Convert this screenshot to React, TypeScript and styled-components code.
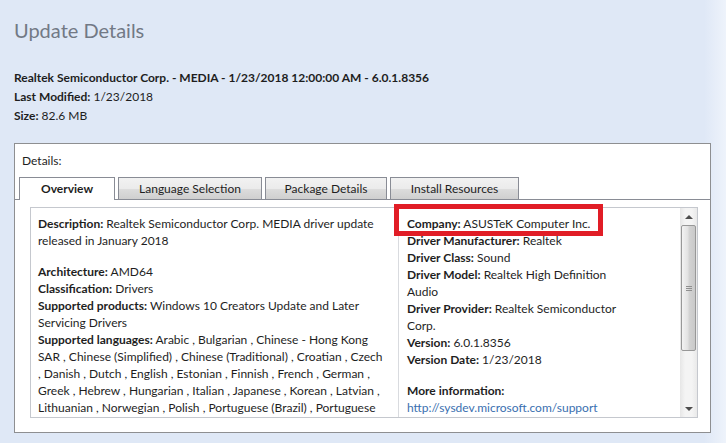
import React from "react";
import styled, { createGlobalStyle } from "styled-components";

const GlobalStyle = createGlobalStyle`
  html, body {
    margin: 0;
    height: 100%;
  }
  body {
    background: linear-gradient(90deg, #dfe8f6 0%, #dfe8f6 97%, #eef3fb 100%);
    font-family: Lato, "Open Sans", sans-serif;
    font-size: 12px;
    color: #1e1e1e;
    overflow: hidden;
  }
`;

const Page = styled.div`
  padding: 18px 15px 0 14px;
`;

const Title = styled.h1`
  margin: 0;
  font-size: 20px;
  line-height: 24px;
  font-weight: 400;
  color: #727985;
`;

const Summary = styled.div`
  margin-top: 26px;
  line-height: 19px;
`;

const Label = styled.b`
  font-weight: 700;
`;

const GroupBox = styled.div`
  margin-top: 18px;
  width: 697px;
  height: 290px;
  box-sizing: border-box;
  border: 1px solid #8e8f91;
  background: #fff;
  display: flex;
  flex-direction: column;
`;

const Caption = styled.div`
  padding: 9px 0 0 7px;
  line-height: 16px;
  height: 24px;
`;

const TabStrip = styled.div`
  display: flex;
  gap: 3px;
  padding-left: 4px;
  height: 22px;
  border-bottom: 1px solid #898c95;
`;

const Tab = styled.div<{ $active?: boolean; $w: number }>`
  width: ${(p) => p.$w}px;
  box-sizing: border-box;
  border: 1px solid #898c95;
  border-bottom: none;
  background: ${(p) =>
    p.$active ? "#fff" : "linear-gradient(#f2f2f2, #ebebeb 50%, #dddddd 51%, #cfcfcf)"};
  font-weight: ${(p) => (p.$active ? 700 : 400)};
  text-align: center;
  line-height: 21px;
  margin-bottom: ${(p) => (p.$active ? "-1px" : "0")};
  height: ${(p) => (p.$active ? "23px" : "22px")};
`;

const Panel = styled.div`
  flex: 1;
  padding: 7px 14px 14px 15px;
  display: flex;
  min-height: 0;
`;

const ContentBox = styled.div`
  flex: 1;
  border: 1px solid #c5c8ce;
  display: flex;
`;

const Column = styled.div<{ $w: number; $divider?: boolean }>`
  width: ${(p) => p.$w}px;
  box-sizing: border-box;
  padding: 7px 0 0 ${(p) => (p.$divider ? 8 : 7)}px;
  border-left: ${(p) => (p.$divider ? "1px solid #d9dbdf" : "none")};
  line-height: 17px;
  white-space: nowrap;
`;

const Para = styled.p`
  margin: 0 0 14px;
`;

const Highlight = styled.div`
  position: relative;
  display: inline-block;
  &::after {
    content: "";
    position: absolute;
    left: -13px;
    right: -13px;
    top: -11px;
    bottom: -4px;
    border: 5px solid #e11d26;
  }
`;

const Link = styled.a`
  color: #3a6fb0;
  text-decoration: none;
`;

const Scrollbar = styled.div`
  width: 17px;
  flex-shrink: 0;
  background: linear-gradient(90deg, #e6e6e6, #f4f4f4 30%, #f4f4f4 70%, #e9e9e9);
  display: flex;
  flex-direction: column;
  align-items: center;
`;

const Arrow = styled.div<{ $down?: boolean }>`
  height: 17px;
  width: 100%;
  display: flex;
  align-items: center;
  justify-content: center;
  &::before {
    content: "";
    border-left: 4px solid transparent;
    border-right: 4px solid transparent;
    ${(p) =>
      p.$down ? "border-top: 4px solid #4d4d4d;" : "border-bottom: 4px solid #4d4d4d;"}
  }
`;

const Thumb = styled.div`
  width: 15px;
  height: 126px;
  box-sizing: border-box;
  border: 1px solid #989898;
  border-radius: 2px;
  background: linear-gradient(90deg, #f3f3f3, #e2e2e2 45%, #d3d3d3 55%, #c9c9c9);
  display: flex;
  align-items: center;
  justify-content: center;
`;

const Grip = styled.div`
  width: 6px;
  height: 5px;
  background: repeating-linear-gradient(#8f8f8f 0 1px, transparent 1px 2px);
`;

const Track = styled.div`
  flex: 1;
`;

export default function App() {
  return (
    <>
      <GlobalStyle />
      <Page>
        <Title>Update Details</Title>
        <Summary>
          <div>
            <Label>Realtek Semiconductor Corp. - MEDIA - 1/23/2018 12:00:00 AM - 6.0.1.8356</Label>
          </div>
          <div>
            <Label>Last Modified:</Label> 1/23/2018
          </div>
          <div>
            <Label>Size:</Label> 82.6 MB
          </div>
        </Summary>
        <GroupBox>
          <Caption>Details:</Caption>
          <TabStrip>
            <Tab $active $w={96}>Overview</Tab>
            <Tab $w={144}>Language Selection</Tab>
            <Tab $w={122}>Package Details</Tab>
            <Tab $w={129}>Install Resources</Tab>
          </TabStrip>
          <Panel>
            <ContentBox>
              <Column $w={367}>
                <Para>
                  <Label>Description:</Label> Realtek Semiconductor Corp. MEDIA driver update
                  <br />
                  released in January 2018
                </Para>
                <div>
                  <Label>Architecture:</Label> AMD64
                </div>
                <div>
                  <Label>Classification:</Label> Drivers
                </div>
                <div>
                  <Label>Supported products:</Label> Windows 10 Creators Update and Later
                  <br />
                  Servicing Drivers
                </div>
                <div>
                  <Label>Supported languages:</Label> Arabic , Bulgarian , Chinese - Hong Kong
                  <br />
                  SAR , Chinese (Simplified) , Chinese (Traditional) , Croatian , Czech
                  <br />, Danish , Dutch , English , Estonian , Finnish , French , German ,
                  <br />
                  Greek , Hebrew , Hungarian , Italian , Japanese , Korean , Latvian ,
                  <br />
                  Lithuanian , Norwegian , Polish , Portuguese (Brazil) , Portuguese
                </div>
              </Column>
              <Column $w={282} $divider>
                <Highlight>
                  <Label>Company:</Label> ASUSTeK Computer Inc.
                </Highlight>
                <div>
                  <Label>Driver Manufacturer:</Label> Realtek
                </div>
                <div>
                  <Label>Driver Class:</Label> Sound
                </div>
                <div>
                  <Label>Driver Model:</Label> Realtek High Definition
                  <br />
                  Audio
                </div>
                <div>
                  <Label>Driver Provider:</Label> Realtek Semiconductor
                  <br />
                  Corp.
                </div>
                <div>
                  <Label>Version:</Label> 6.0.1.8356
                </div>
                <Para>
                  <Label>Version Date:</Label> 1/23/2018
                </Para>
                <div>
                  <Label>More information:</Label>
                </div>
                <Link href="#">http://sysdev.microsoft.com/support</Link>
              </Column>
              <Scrollbar>
                <Arrow />
                <Thumb>
                  <Grip />
                </Thumb>
                <Track />
                <Arrow $down />
              </Scrollbar>
            </ContentBox>
          </Panel>
        </GroupBox>
      </Page>
    </>
  );
}
